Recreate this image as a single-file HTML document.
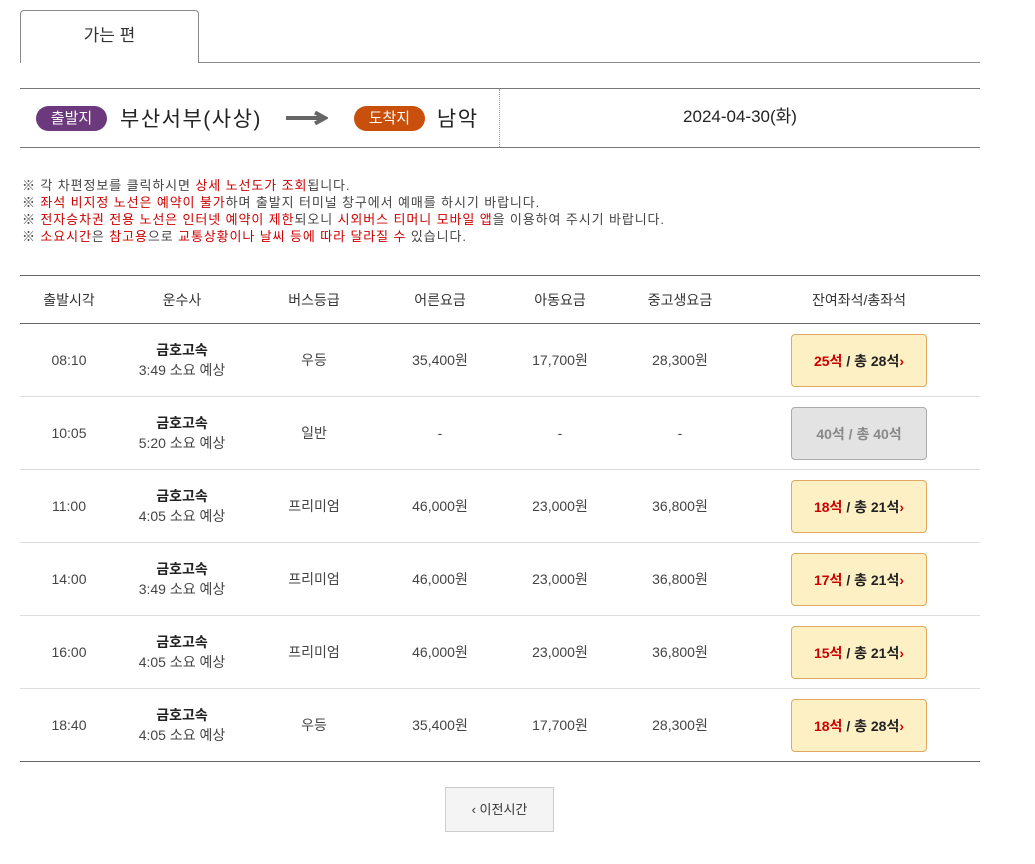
<!DOCTYPE html>
<html><head><meta charset="utf-8"><style>
body{margin:0;background:#fff;font-family:"Liberation Sans","Noto Sans CJK KR",sans-serif;color:#333;width:1035px;height:864px;overflow:hidden;position:relative}
.a{position:absolute}
.tab{left:20px;top:10px;width:179px;height:53px;border:1px solid #888;border-bottom:none;border-radius:4px 4px 0 0;background:#fff;text-align:center;line-height:50px;font-size:17px;color:#333;box-sizing:border-box}
.pill{display:inline-block;border-radius:13px;color:#fff;font-size:15px;height:25px;line-height:25px;width:71px;text-align:center}
.notes{left:22px;top:177px;font-size:13px;line-height:17px;color:#444;letter-spacing:0.9px;white-space:nowrap}
.notes b{font-weight:normal;color:#c00}
table{position:absolute;left:20px;top:275px;width:960px;border-collapse:collapse;font-size:14px;color:#444}
th{height:47px;padding:0;font-weight:normal;border-top:1px solid #666;border-bottom:1px solid #666;font-size:14px;color:#333}
td{height:72px;padding:0;border-bottom:1px solid #ddd;text-align:center;line-height:20px}
tr:last-child td{border-bottom:1px solid #666}
.co{font-weight:bold;color:#222}
.seat{display:inline-block;width:136px;height:53px;line-height:52px;border:1px solid #e0a860;background:#fdf0c4;border-radius:4px;font-weight:bold;color:#222;font-size:14px;box-sizing:border-box;vertical-align:middle}
.seat i{font-style:normal;color:#c00}
.seat.g{background:#e3e3e3;border-color:#aaa;color:#888}
</style></head><body>
<div class="a tab">가는 편</div>
<div class="a" style="left:198px;top:62px;width:782px;border-top:1px solid #888"></div>
<div class="a" style="left:20px;top:88px;width:960px;height:60px;border-top:1px solid #777;border-bottom:1px solid #777;box-sizing:border-box"></div>
<div class="a" style="left:499px;top:89px;height:58px;border-left:1px dotted #999"></div>
<div class="a" style="left:36px;top:103px;display:flex;align-items:center;height:30px">
<span class="pill" style="background:#6c3a7c">출발지</span>
<span style="font-size:21px;color:#222;margin-left:13px;letter-spacing:1.5px">부산서부(사상)</span>
<svg width="42" height="14" style="margin-left:24px" viewBox="0 0 42 14"><path d="M0 7H36M29 1.5L39 7L29 12.5" stroke="#666" stroke-width="4" fill="none"/></svg>
<span class="pill" style="background:#c9500c;margin-left:26px">도착지</span>
<span style="font-size:21px;color:#222;margin-left:12px;letter-spacing:1.5px">남악</span>
</div>
<div class="a" style="left:500px;top:102px;width:480px;text-align:center;font-size:17px;color:#222">2024-04-30(화)</div>
<div class="a notes">
※ 각 차편정보를 클릭하시면 <b>상세 노선도가 조회</b>됩니다.<br>
※ <b>좌석 비지정 노선은 예약이 불가</b>하며 출발지 터미널 창구에서 예매를 하시기 바랍니다.<br>
※ <b>전자승차권 전용 노선은 인터넷 예약이 제한</b>되오니 <b>시외버스 티머니 모바일 앱</b>을 이용하여 주시기 바랍니다.<br>
※ <b>소요시간</b>은 <b>참고용</b>으로 <b>교통상황이나 날씨 등에 따라 달라질 수</b> 있습니다.
</div>
<table>
<colgroup><col style="width:98px"><col style="width:128px"><col style="width:136px"><col style="width:116px"><col style="width:124px"><col style="width:116px"><col></colgroup>
<tr><th>출발시각</th><th>운수사</th><th>버스등급</th><th>어른요금</th><th>아동요금</th><th>중고생요금</th><th>잔여좌석/총좌석</th></tr>
<tr><td>08:10</td><td><span class="co">금호고속</span><br>3:49 소요 예상</td><td>우등</td><td>35,400원</td><td>17,700원</td><td>28,300원</td><td><span class="seat"><i>25석</i> / 총 28석<i>›</i></span></td></tr>
<tr><td>10:05</td><td><span class="co">금호고속</span><br>5:20 소요 예상</td><td>일반</td><td>-</td><td>-</td><td>-</td><td><span class="seat g">40석 / 총 40석</span></td></tr>
<tr><td>11:00</td><td><span class="co">금호고속</span><br>4:05 소요 예상</td><td>프리미엄</td><td>46,000원</td><td>23,000원</td><td>36,800원</td><td><span class="seat"><i>18석</i> / 총 21석<i>›</i></span></td></tr>
<tr><td>14:00</td><td><span class="co">금호고속</span><br>3:49 소요 예상</td><td>프리미엄</td><td>46,000원</td><td>23,000원</td><td>36,800원</td><td><span class="seat"><i>17석</i> / 총 21석<i>›</i></span></td></tr>
<tr><td>16:00</td><td><span class="co">금호고속</span><br>4:05 소요 예상</td><td>프리미엄</td><td>46,000원</td><td>23,000원</td><td>36,800원</td><td><span class="seat"><i>15석</i> / 총 21석<i>›</i></span></td></tr>
<tr><td>18:40</td><td><span class="co">금호고속</span><br>4:05 소요 예상</td><td>우등</td><td>35,400원</td><td>17,700원</td><td>28,300원</td><td><span class="seat"><i>18석</i> / 총 28석<i>›</i></span></td></tr>
</table>
<div class="a" style="left:445px;top:787px;width:109px;height:45px;border:1px solid #ccc;background:#f4f4f4;box-sizing:border-box;text-align:center;line-height:43px;font-size:13px;color:#333">‹ 이전시간</div>
</body></html>
